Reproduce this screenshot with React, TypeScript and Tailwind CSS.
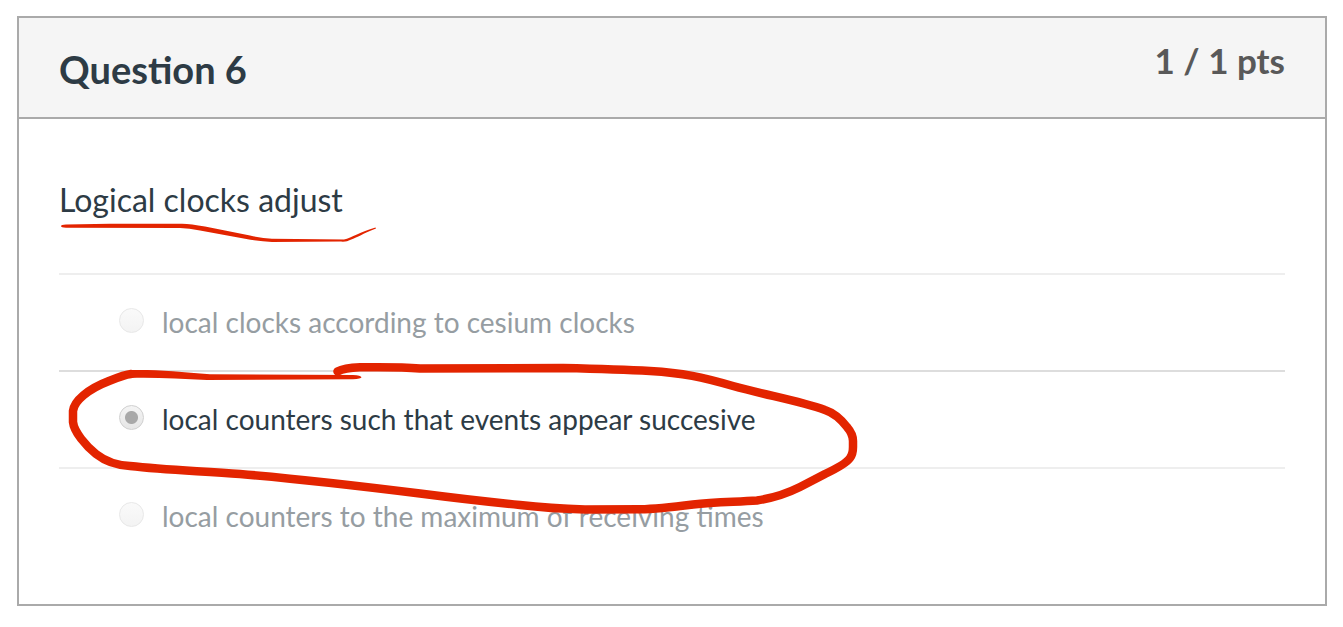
const options = [
  { id: "cesium", text: "local clocks according to cesium clocks", selected: false },
  { id: "succesive", text: "local counters such that events appear succesive", selected: true },
  { id: "maximum", text: "local counters to the maximum of receiving times", selected: false },
];

function Answer({ id, text, selected }: { id: string; text: string; selected: boolean }) {
  return (
    <div className={`flex h-[97px] items-center border-t-2 pl-[60px] ${selected ? "border-[#dddddd]" : "border-[#eeeeee]"}`}>
      <input
        type="radio"
        id={id}
        name="answer"
        disabled
        defaultChecked={selected}
        className={`mb-1 size-[25px] shrink-0 appearance-none rounded-full border ${
          selected
            ? "border-[#d0d0d0] bg-[radial-gradient(circle,#a8a8a8_6px,transparent_7px),linear-gradient(#f4f4f4,#e6e6e6)]"
            : "border-[#e8e8e8] bg-linear-to-b from-[#fafafa] to-[#f3f3f3]"
        }`}
      />
      <label htmlFor={id} className={`pb-0.5 pl-[18px] text-[28px] leading-9 ${selected ? "text-[#2d3b45]" : "text-[#969da2]"}`}>
        {text}
      </label>
    </div>
  );
}

export default function App() {
  return (
    <main className="min-h-screen bg-white px-4 pt-4 font-['Lato',sans-serif] text-[#2d3b45]">
      <section className="relative ml-px border-2 border-[#aaaaaa]">
        <header className="flex justify-between border-b-2 border-[#aaaaaa] bg-[#f5f5f5] px-10 pt-[22px] pb-6">
          <h1 className="pt-[5px] text-[38px] leading-12 font-bold">Question 6</h1>
          <span className="text-[35px] leading-10 font-bold text-[#595959]">1 / 1 pts</span>
        </header>
        <div className="px-10 pt-[61px] pb-10">
          <p className="pb-[53px] text-[32px] leading-10">Logical clocks adjust</p>
          <fieldset>
            {options.map((option) => (
              <Answer key={option.id} {...option} />
            ))}
          </fieldset>
        </div>
        <svg
          className="pointer-events-none absolute top-0 left-0"
          width="860"
          height="520"
          viewBox="19 18 860 520"
          fill="#e32400"
          aria-hidden="true"
        >
          <path d="M61 226Q61 224.7 66 224.4L110 223.8L182 223.7Q191 223.9 205 226.6L250 235.5Q262 238.3 272 238.8L344 239.4C352 237.5 360 232 375.5 227.4L376 228.6C364 233 355 239 347 241.2Q345 241.8 341 241.6L272 241.9Q258 241.2 245 238.7L200 230.4Q189 228.2 180 228L66 227.8Q61 227.5 61 226Z" />
          <path d="M130 370C155 369.4 180 371.4 210 374.3L353 375Q361 375.5 361.5 377.3Q361 379 353 379.2L207 380C180 378.7 155 377.3 130 378Z" />
          <path
            d="M131 374Q125 374.5 109 381C88 389 74 401 73 411V422C74 432 86 446 96 454Q110 465 130 466C165 470 202 471 240 474C300 479 360 486 420 493.5C455 498 490 502 520 505Q550 508.5 585 509.5L640 509.3Q658 509 693 504.5C715 502 736 502 757 500.5Q780 497 800 487L825 474Q846 464 850 458Q853 454 853 447V441Q853 434 847 427Q837 414 825 410C800 401 765 395 733 386C702 377 683 373 650 371Q620 369.3 563 368L420 368.4Q400 366.8 360 367.3Q344 367.8 337.5 371.5"
            fill="none"
            stroke="#e32400"
            strokeWidth="8.5"
            strokeLinecap="round"
            strokeLinejoin="round"
          />
        </svg>
      </section>
    </main>
  );
}
